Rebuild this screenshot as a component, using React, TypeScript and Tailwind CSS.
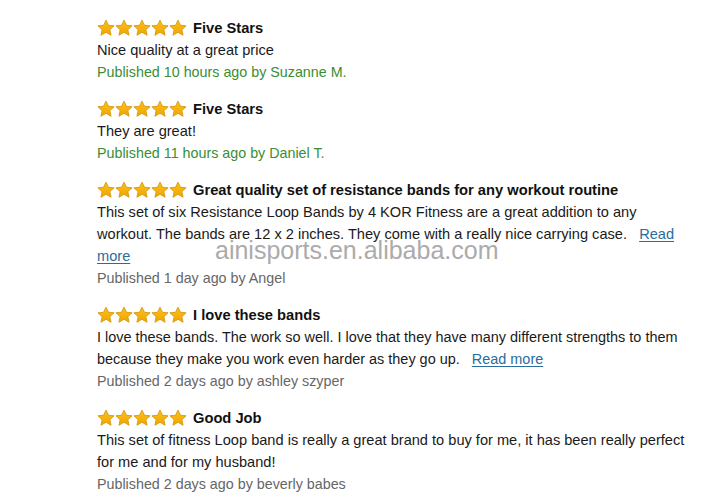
import React from "react";

const Star = () => (
  <svg width="18" height="18" viewBox="0 0 24 23" className="block">
    <defs>
      <linearGradient id="sg" x1="0" y1="0" x2="0" y2="1">
        <stop offset="0" stopColor="#fcc21b" />
        <stop offset="1" stopColor="#f0a500" />
      </linearGradient>
    </defs>
    <polygon
      points="12,1 15.3,7.9 22.8,8.6 17.1,13.7 18.8,21.2 12,17.2 5.2,21.2 6.9,13.7 1.2,8.6 8.7,7.9"
      fill="url(#sg)"
      stroke="#d8990f"
      strokeWidth="1.2"
      strokeLinejoin="round"
    />
  </svg>
);

const Stars = () => (
  <div className="flex items-center mr-[6px]">
    <Star />
    <Star />
    <Star />
    <Star />
    <Star />
  </div>
);

type Review = {
  title: string;
  lines: React.ReactNode[];
  pub: string;
  green?: boolean;
  narrow?: boolean;
};

const Link = ({ children }: { children: React.ReactNode }) => (
  <span className="text-[#2a6d9c] underline underline-offset-2">{children}</span>
);

const reviews: Review[] = [
  {
    title: "Five Stars",
    lines: ["Nice quality at a great price"],
    pub: "Published 10 hours ago by Suzanne M.",
    green: true,
  },
  {
    title: "Five Stars",
    lines: ["They are great!"],
    pub: "Published 11 hours ago by Daniel T.",
    green: true,
  },
  {
    title: "Great quality set of resistance bands for any workout routine",
    lines: [
      "This set of six Resistance Loop Bands by 4 KOR Fitness are a great addition to any",
      <>
        workout. The bands are 12 x 2 inches. They come with a really nice carrying case.{"\u00a0\u00a0 "}
        <Link>Read</Link>
      </>,
      <Link>more</Link>,
    ],
    pub: "Published 1 day ago by Angel",
  },
  {
    title: "I love these bands",
    lines: [
      "I love these bands. The work so well. I love that they have many different strengths to them",
      <>
        because they make you work even harder as they go up.{"\u00a0\u00a0 "}
        <Link>Read more</Link>
      </>,
    ],
    pub: "Published 2 days ago by ashley szyper",
    narrow: true,
  },
  {
    title: "Good Job",
    lines: [
      "This set of fitness Loop band is really a great brand to buy for me, it has been really perfect",
      "for me and for my husband!",
    ],
    pub: "Published 2 days ago by beverly babes",
  },
];

export default function App() {
  return (
    <div
      className="relative w-[709px] h-[504px] bg-white overflow-hidden"
      style={{ fontFamily: '"Liberation Sans", Arial, sans-serif' }}
    >
      <div className="pl-[97px] pt-[17px] flex flex-col gap-[15px]">
        {reviews.map((r, i) => (
          <div key={i} className="flex flex-col">
            <div className="flex items-center h-[22px]">
              <Stars />
              <span className="text-[14.7px] font-bold text-[#111] leading-[22px] whitespace-nowrap">
                {r.title}
              </span>
            </div>
            {r.lines.map((l, j) => (
              <div
                key={j}
                className={
                  "leading-[22px] text-[#1a1a1a] whitespace-nowrap " +
                  (r.narrow ? "text-[14.45px]" : "text-[14.6px]")
                }
              >
                {l}
              </div>
            ))}
            <div
              className={
                "text-[14.3px] leading-[22px] whitespace-nowrap " +
                (r.green ? "text-[#3a8e34]" : "text-[#666666]")
              }
            >
              {r.pub}
            </div>
          </div>
        ))}
      </div>
      <div className="absolute left-[215px] top-[238px] text-[25px] leading-[25px] text-[#ababab] whitespace-nowrap pointer-events-none">
        ainisports.en.alibaba.com
      </div>
    </div>
  );
}
